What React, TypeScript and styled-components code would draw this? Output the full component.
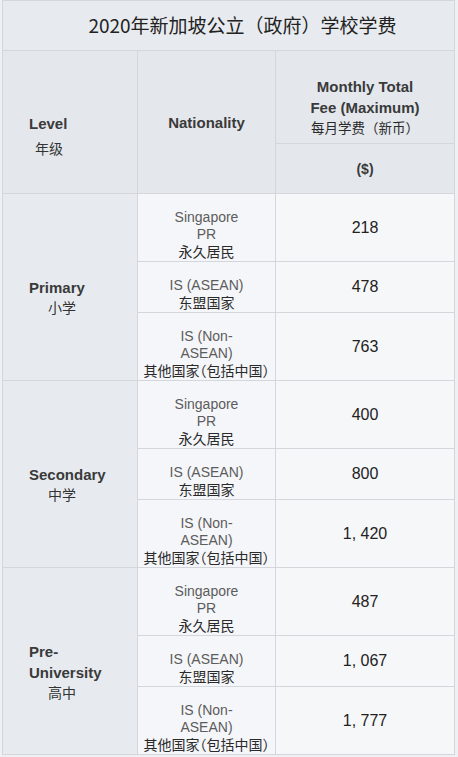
import styled, { createGlobalStyle } from 'styled-components';

const GlobalStyle = createGlobalStyle`
  body {
    margin: 0;
    background: #eef0f3;
    font-family: "Liberation Sans", "Noto Sans CJK SC", sans-serif;
  }
`;

type Row = { en: string; zh: string; fee: string };
type Group = { en: string; zh: string; indent: number; rows: Row[] };

const nationalities = [
  { en: 'Singapore PR', zh: '永久居民' },
  { en: 'IS (ASEAN)', zh: '东盟国家' },
  { en: 'IS (Non-ASEAN)', zh: '其他国家（包括中国）' },
];

const makeRows = (fees: string[]): Row[] =>
  nationalities.map((n, i) => ({ ...n, fee: fees[i] }));

const groups: Group[] = [
  { en: 'Primary', zh: '小学', indent: 19, rows: makeRows(['218', '478', '763']) },
  { en: 'Secondary', zh: '中学', indent: 19, rows: makeRows(['400', '800', '1, 420']) },
  { en: 'Pre-University', zh: '高中', indent: 19, rows: makeRows(['487', '1, 067', '1, 777']) },
];

export default function App() {
  return (
    <>
      <GlobalStyle />
      <Table>
        <colgroup>
          <col style={{ width: 135 }} />
          <col style={{ width: 138 }} />
          <col style={{ width: 179 }} />
        </colgroup>
        <thead>
          <tr>
            <TitleCell colSpan={3}>2020年新加坡公立（政府）学校学费</TitleCell>
          </tr>
          <tr>
            <LevelHead rowSpan={2}>
              <LevelName>Level</LevelName>
              <LevelZh $indent={6} $gap={5}>年级</LevelZh>
            </LevelHead>
            <HeadCell rowSpan={2}>Nationality</HeadCell>
            <FeeHead>
              Monthly Total
              <br />
              Fee (Maximum)
              <FeeHeadZh>每月学费（新币）</FeeHeadZh>
            </FeeHead>
          </tr>
          <tr>
            <CurrencyCell>($)</CurrencyCell>
          </tr>
        </thead>
        <tbody>
          {groups.map((g) =>
            g.rows.map((r, i) => (
              <tr key={g.en + i}>
                {i === 0 && (
                  <LevelCell rowSpan={3}>
                    <LevelName $wrap>{g.en}</LevelName>
                    <LevelZh $indent={g.indent}>{g.zh}</LevelZh>
                  </LevelCell>
                )}
                <NationCell>
                  <NationEn>{r.en}</NationEn>
                  <NationZh>{r.zh}</NationZh>
                </NationCell>
                <FeeCell>{r.fee}</FeeCell>
              </tr>
            ))
          )}
        </tbody>
      </Table>
    </>
  );
}

const Table = styled.table`
  width: 452px;
  margin-left: 2px;
  border-collapse: collapse;
  table-layout: fixed;

  th,
  td {
    border: 1px solid #d3d6da;
  }
`;

const TitleCell = styled.th`
  height: 47px;
  padding: 0 0 2px 28px;
  background: #e7eaee;
  color: #222;
  font-family: "Noto Sans CJK SC", sans-serif;
  font-size: 19px;
  font-weight: 400;
  text-align: center;
`;

const HeadCell = styled.th`
  background: #e4e8ed;
  color: #3a3a3a;
  font-size: 15px;
  font-weight: 700;
  text-align: center;
  vertical-align: middle;
  padding: 0 6px;
`;

const LevelHead = styled(HeadCell)`
  text-align: left;
  padding: 28px 0 0 26px;
`;

const LevelName = styled.div<{ $wrap?: boolean }>`
  font-size: 15px;
  font-weight: 700;
  color: #3a3a3a;
  line-height: 21px;
  width: ${(p) => (p.$wrap ? '90px' : 'auto')};
`;

const LevelZh = styled.div<{ $indent: number; $gap?: number }>`
  margin-left: ${(p) => p.$indent}px;
  margin-top: ${(p) => p.$gap ?? 0}px;
  font-size: 14px;
  font-weight: 400;
  line-height: 21px;
  color: #333;
`;

const FeeHead = styled(HeadCell)`
  height: 63px;
  padding: 25px 8px 4px;
  vertical-align: top;
  line-height: 21px;
`;

const FeeHeadZh = styled.div`
  font-size: 13.5px;
  font-weight: 400;
  color: #2a2a2a;
`;

const CurrencyCell = styled(HeadCell)`
  height: 49px;
  font-size: 14px;
`;

const LevelCell = styled.td`
  background: #e7ebf0;
  padding: 22px 0 0 26px;
  vertical-align: middle;
`;

const NationCell = styled.td`
  background: #f5f6f9;
  padding: 15px 4px 2px;
  text-align: center;
  vertical-align: middle;
`;

const NationEn = styled.div`
  width: 84px;
  margin: 0 auto;
  font-size: 14px;
  line-height: 17px;
  color: #5c5c5c;
`;

const NationZh = styled.div`
  font-family: "Noto Sans CJK SC", sans-serif;
  font-size: 14px;
  line-height: 16px;
  color: #2a2a2a;
  white-space: nowrap;
  font-feature-settings: "halt";
`;

const FeeCell = styled.td`
  background: #f6f7f9;
  padding: 8px;
  text-align: center;
  vertical-align: middle;
  font-size: 16px;
  color: #222;
`;
